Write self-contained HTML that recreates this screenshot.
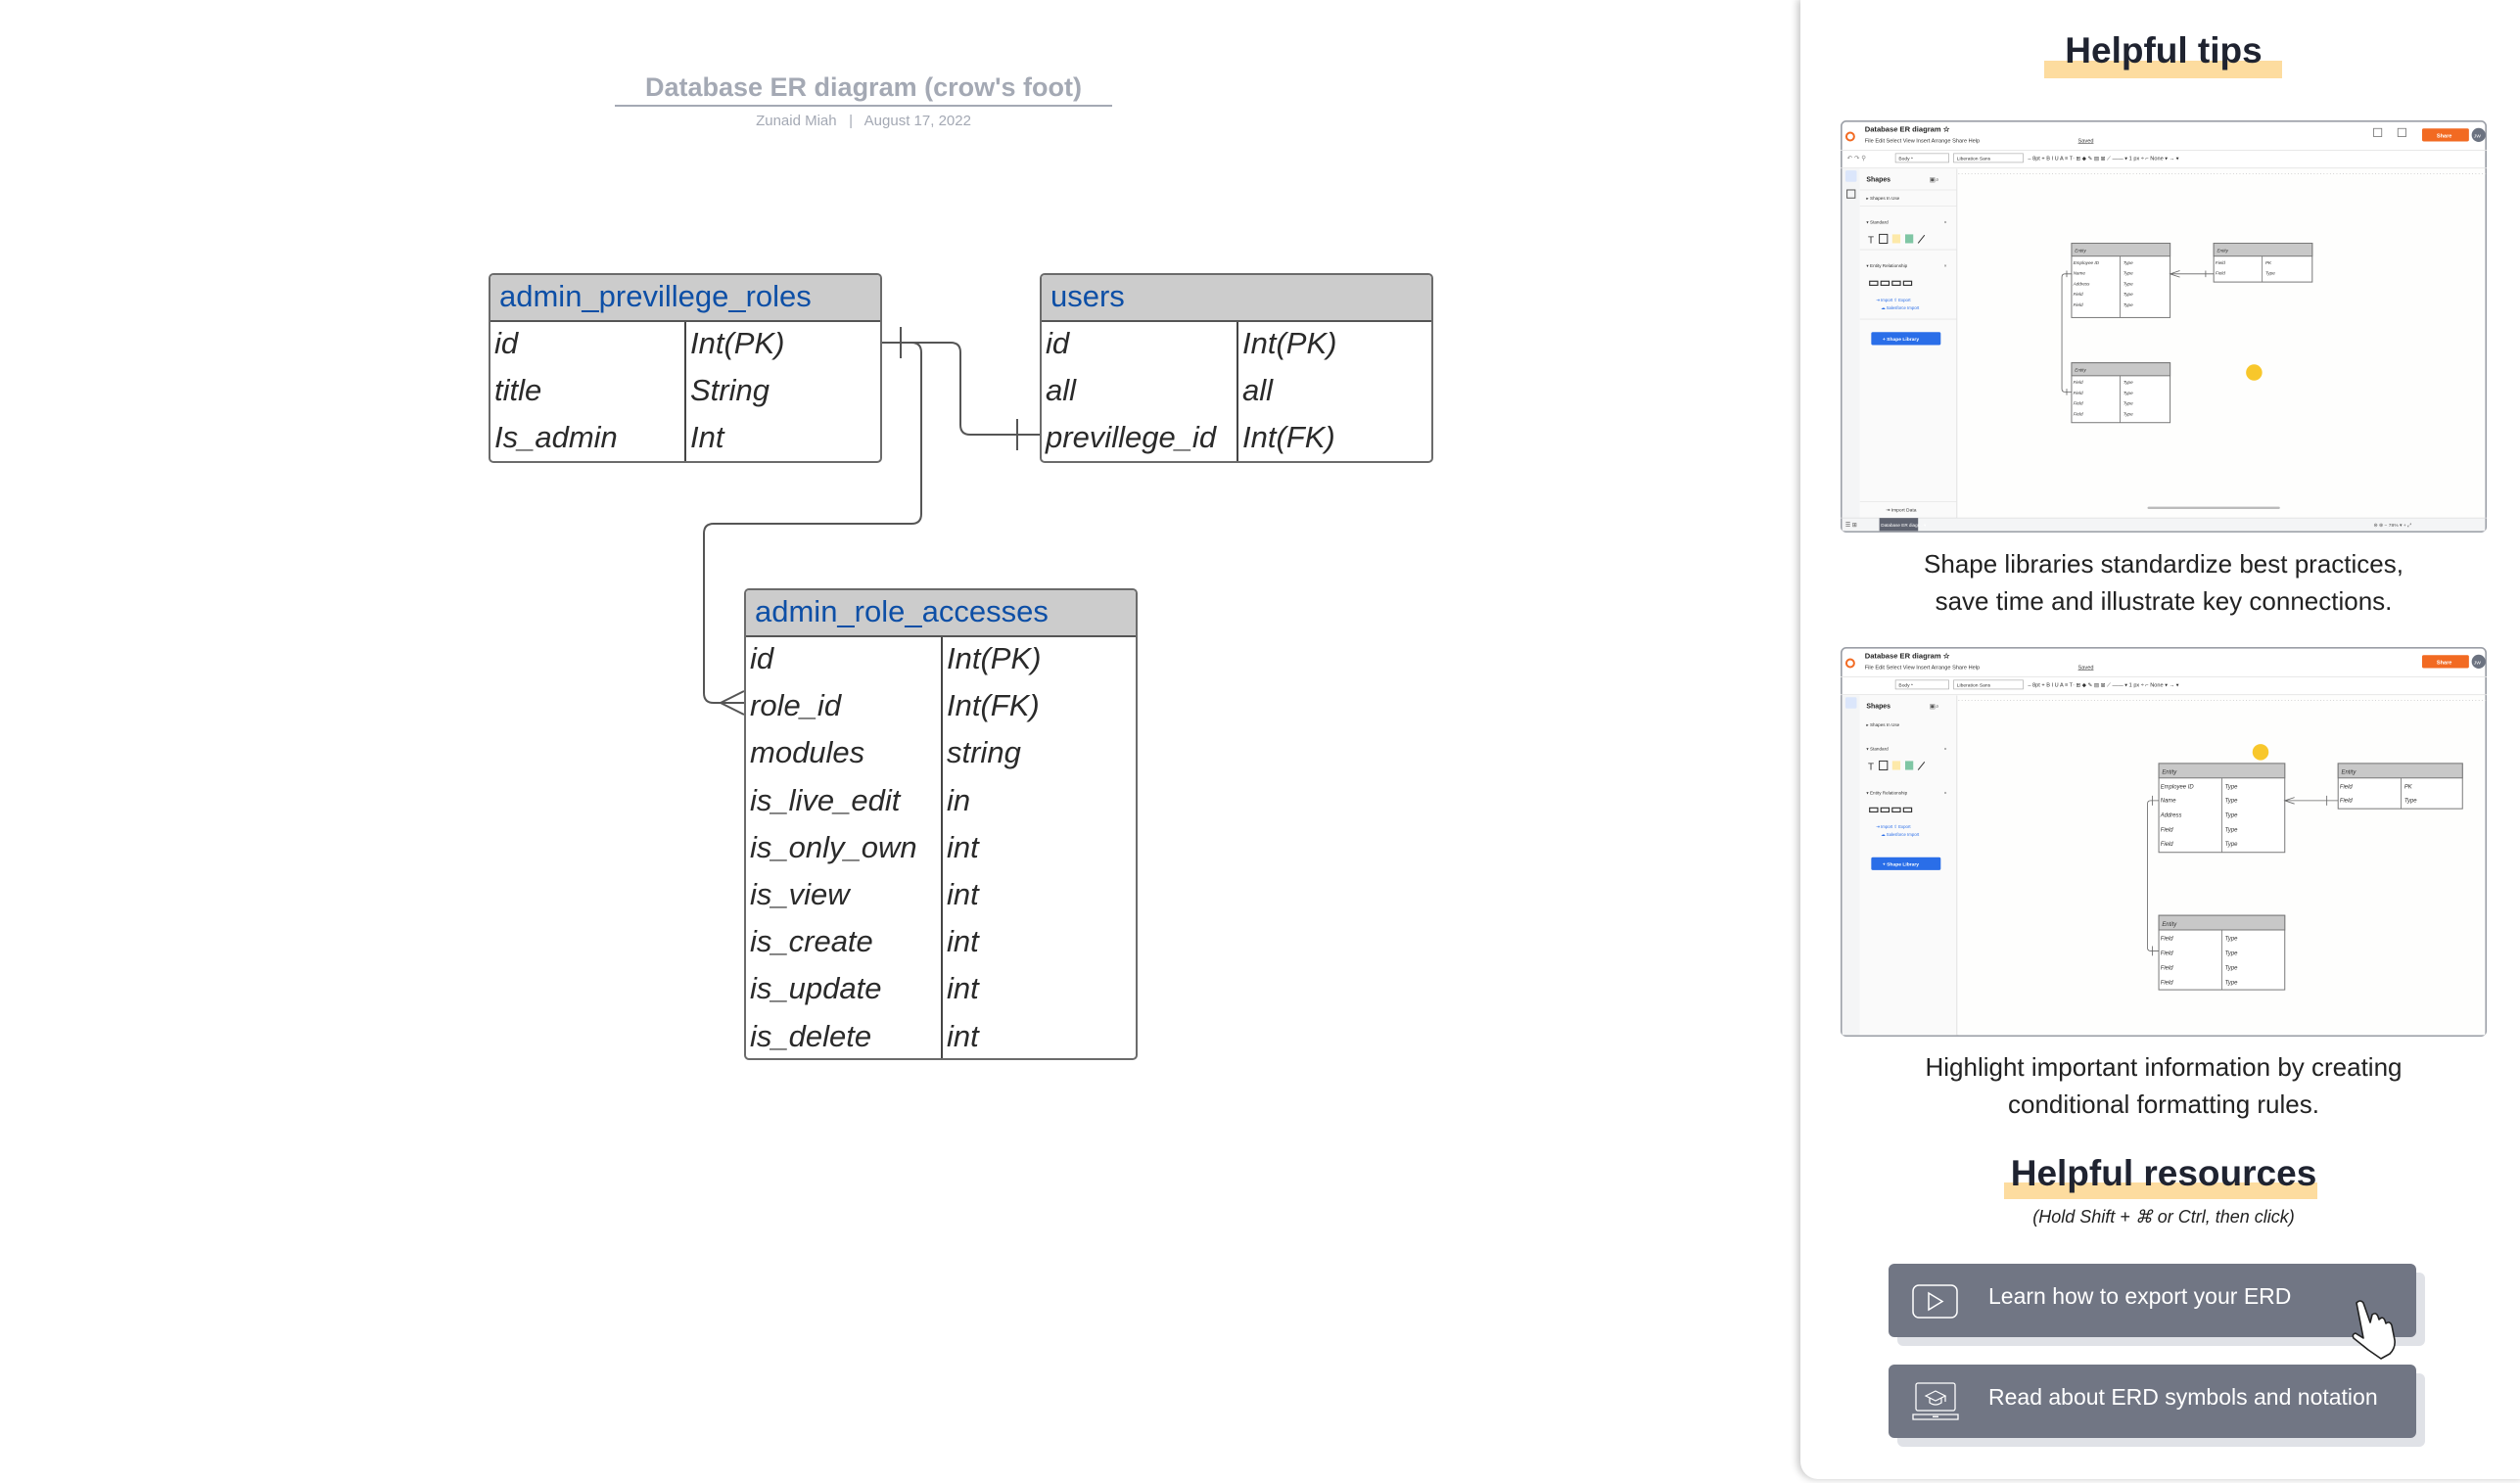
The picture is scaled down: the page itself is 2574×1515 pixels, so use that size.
<!DOCTYPE html>
<html><head><meta charset="utf-8">
<style>
html,body{margin:0;padding:0;background:#fff;}
body{width:2574px;height:1515px;position:relative;overflow:hidden;font-family:"Liberation Sans",sans-serif;}
.abs{position:absolute;}
.wrapL{position:absolute;left:-4px;top:-3px;width:2574px;height:1515px;}
.wrapR{position:absolute;left:-9px;top:-1px;width:2574px;height:1515px;}
.tbl{position:absolute;border:2px solid #6b6b6b;border-radius:5px;background:#fff;overflow:hidden;box-sizing:border-box;}
.tbl .hd{background:#cccccc;height:48px;border-bottom:2px solid #555;box-sizing:border-box;color:#0d4fa6;font-size:31px;line-height:44px;padding-left:9px;}
.tbl .body{position:relative;}
.tbl .row{height:48.2px;font-size:31px;font-style:italic;color:#2a2a2a;line-height:44px;position:relative;}
.tbl .row span{position:absolute;top:0;}
.tbl .div{position:absolute;top:0;bottom:0;width:2px;background:#444;}
.panel{position:absolute;left:1848px;top:0;width:740px;height:1512px;background:#fff;border-radius:0 0 0 18px;box-shadow:-3px 0 8px rgba(0,0,0,0.22);}
.ctr{position:absolute;text-align:center;width:660px;left:1889px;}
.btn{position:absolute;left:1938px;width:539px;height:75px;background:#717684;border-radius:6px;box-shadow:9px 9px 0 #e0e2e7;color:#fff;font-size:23px;}
.btn .t{position:absolute;left:102px;top:20px;}
</style></head><body>

<div class="wrapL">
<div class="abs" style="left:632px;top:77px;width:508px;text-align:center;color:#a4a9b4;font-weight:bold;font-size:27px;">Database ER diagram (crow's foot)</div>
<div class="abs" style="left:632px;top:110px;width:508px;height:2px;background:#a4a9b4;"></div>
<div class="abs" style="left:632px;top:118px;width:508px;text-align:center;color:#a4a9b4;font-size:15px;">Zunaid Miah &nbsp;&nbsp;|&nbsp;&nbsp; August 17, 2022</div>

<svg class="abs" style="left:0;top:0" width="1848" height="1515">
<g fill="none" stroke="#555" stroke-width="2">
<path d="M904,353 H975 Q985,353 985,363 V437 Q985,447 995,447 H1066"/>
<path d="M924,337 V369 M1043,431 V463"/>
<path d="M935,353 Q945,353 945,363 V528 Q945,538 935,538 H733 Q723,538 723,548 V711 Q723,721 733,721 H764"/>
<path d="M740,721 L764,709 M740,721 L764,733"/>
</g>
</svg>

<div class="tbl" style="left:503px;top:282px;width:402px;height:194px;">
<div class="hd">admin_previllege_roles</div>
<div class="body">
<div class="div" style="left:198px;height:144px"></div>
<div class="row"><span style="left:4px">id</span><span style="left:204px">Int(PK)</span></div>
<div class="row"><span style="left:4px">title</span><span style="left:204px">String</span></div>
<div class="row"><span style="left:4px">Is_admin</span><span style="left:204px">Int</span></div>
</div></div>

<div class="tbl" style="left:1066px;top:282px;width:402px;height:194px;">
<div class="hd">users</div>
<div class="body">
<div class="div" style="left:199px;height:144px"></div>
<div class="row"><span style="left:4px">id</span><span style="left:205px">Int(PK)</span></div>
<div class="row"><span style="left:4px">all</span><span style="left:205px">all</span></div>
<div class="row"><span style="left:4px">previllege_id</span><span style="left:205px">Int(FK)</span></div>
</div></div>

<div class="tbl" style="left:764px;top:604px;width:402px;height:482px;">
<div class="hd">admin_role_accesses</div>
<div class="body">
<div class="div" style="left:199px;height:434px"></div>
<div class="row"><span style="left:4px">id</span><span style="left:205px">Int(PK)</span></div>
<div class="row"><span style="left:4px">role_id</span><span style="left:205px">Int(FK)</span></div>
<div class="row"><span style="left:4px">modules</span><span style="left:205px">string</span></div>
<div class="row"><span style="left:4px">is_live_edit</span><span style="left:205px">in</span></div>
<div class="row"><span style="left:4px">is_only_own</span><span style="left:205px">int</span></div>
<div class="row"><span style="left:4px">is_view</span><span style="left:205px">int</span></div>
<div class="row"><span style="left:4px">is_create</span><span style="left:205px">int</span></div>
<div class="row"><span style="left:4px">is_update</span><span style="left:205px">int</span></div>
<div class="row"><span style="left:4px">is_delete</span><span style="left:205px">int</span></div>
</div></div>
</div>

<div class="wrapR">
<div class="panel"></div>
<div class="abs" style="left:2097px;top:63px;width:243px;height:18px;background:#fddc9f;"></div>
<div class="ctr" style="top:32px;font-size:37px;font-weight:bold;color:#1f2330;">Helpful tips</div>

<svg class="abs" style="left:1889px;top:124px" width="660" height="421" viewBox="0 0 400 255" preserveAspectRatio="none" font-family="Liberation Sans, sans-serif">
<rect x="0.5" y="0.5" width="399" height="254" rx="3" fill="#fff" stroke="#9a9ea6"/>
<rect x="73" y="30" width="326" height="216" fill="#fefefd"/>
<rect x="1" y="30" width="11" height="216" fill="#f4f5f6"/>
<rect x="12" y="30" width="60" height="216" fill="#fafafa"/>
<line x1="72" y1="30" x2="72" y2="246" stroke="#e0e0e0" stroke-width="0.6"/>
<line x1="0" y1="18.5" x2="400" y2="18.5" stroke="#e4e4e4" stroke-width="0.5"/>
<line x1="0" y1="29.5" x2="400" y2="29.5" stroke="#e4e4e4" stroke-width="0.5"/>
<line x1="73" y1="33" x2="400" y2="33" stroke="#ccc" stroke-width="0.6" stroke-dasharray="0.5 1.5"/>
<circle cx="6" cy="10" r="2.4" fill="none" stroke="#f26a22" stroke-width="1.2"/>
<text x="15" y="7" font-size="4.6" font-weight="bold" fill="#222">Database ER diagram ☆</text>
<text x="15" y="13.5" font-size="3.4" fill="#333">File  Edit  Select  View  Insert  Arrange  Share  Help</text>
<text x="147" y="13.5" font-size="3.4" fill="#333" text-decoration="underline">Saved</text>
<rect x="360" y="5" width="29" height="8" rx="1" fill="#f26a22"/>
<text x="369" y="10.5" font-size="3.4" fill="#fff" font-weight="bold">Share</text>
<circle cx="395" cy="9" r="4.3" fill="#6b7280"/>
<text x="392" y="10.5" font-size="3" fill="#fff">JW</text>
<rect x="330" y="5" width="5" height="5" fill="none" stroke="#777" stroke-width="0.5"/>
<rect x="345" y="5" width="5" height="5" fill="none" stroke="#777" stroke-width="0.5"/>
<rect x="34" y="20.5" width="33" height="5.5" fill="#fff" stroke="#aaa" stroke-width="0.4"/><text x="36" y="24.5" font-size="3" fill="#333">Body *</text>
<rect x="70" y="20.5" width="43" height="5.5" fill="#fff" stroke="#aaa" stroke-width="0.4"/><text x="72" y="24.5" font-size="3" fill="#333">Liberation Sans</text>
<text x="116" y="24.5" font-size="3.4" fill="#333">–  8pt +  B  I  U  A  ≡  T·   ⊞ ◆ ✎ ▤ ⊠ ⟋  —— ▾  1 px ÷  ⌐  None ▾  → ▾</text>
<text x="4" y="24.5" font-size="4" fill="#888">↶ ↷  ⚲</text>
<rect x="3" y="31" width="7" height="7" rx="1" fill="#dbe6fb"/>
<rect x="4" y="43" width="5" height="5" fill="none" stroke="#555" stroke-width="0.6"/>
<text x="16" y="38" font-size="4.2" font-weight="bold" fill="#222">Shapes</text>
<text x="55" y="38" font-size="4" fill="#555">▣⌕</text>
<line x1="12" y1="43" x2="72" y2="43" stroke="#e6e6e6" stroke-width="0.5"/>
<text x="16" y="49" font-size="2.8" fill="#333">▸  Shapes In Use</text>
<line x1="12" y1="53" x2="72" y2="53" stroke="#e6e6e6" stroke-width="0.5"/>
<text x="16" y="64" font-size="2.8" fill="#333">▾  Standard</text><text x="64" y="64" font-size="3" fill="#555">×</text>
<text x="17" y="76" font-size="6" fill="#333">T</text>
<rect x="24" y="70.5" width="5" height="5.5" fill="none" stroke="#333" stroke-width="0.6"/>
<rect x="32" y="70.5" width="5" height="5.5" fill="#fde9a9"/>
<rect x="40" y="70.5" width="5" height="5.5" fill="#7fc6a4"/>
<line x1="48" y1="76" x2="52" y2="71" stroke="#333" stroke-width="0.6"/>
<line x1="12" y1="80" x2="72" y2="80" stroke="#e6e6e6" stroke-width="0.5"/>
<text x="16" y="91" font-size="2.8" fill="#333">▾  Entity Relationship</text><text x="64" y="91" font-size="3" fill="#555">×</text>
<g fill="none" stroke="#333" stroke-width="0.7"><rect x="18" y="99.5" width="5" height="2.5"/><rect x="25" y="99.5" width="5" height="2.5"/><rect x="32" y="99.5" width="5" height="2.5"/><rect x="39" y="99.5" width="5" height="2.5"/></g>
<text x="22" y="112" font-size="2.6" fill="#2a6ee8">⇥ Import    ⇧ Export</text>
<text x="25" y="117" font-size="2.6" fill="#2a6ee8">☁ Salesforce Import</text>
<line x1="12" y1="123" x2="72" y2="123" stroke="#e6e6e6" stroke-width="0.5"/>
<rect x="19" y="131" width="43" height="8" rx="1" fill="#2a6ee8"/>
<text x="26" y="136.3" font-size="3" fill="#fff" font-weight="bold">+ Shape Library</text>
<line x1="12" y1="236" x2="72" y2="236" stroke="#e6e6e6" stroke-width="0.5"/>
<text x="28" y="242" font-size="3" fill="#333">⇥ Import Data</text>
<rect x="1" y="246" width="398" height="8" fill="#f4f5f6"/>
<line x1="0" y1="246" x2="400" y2="246" stroke="#ddd" stroke-width="0.5"/>
<rect x="24" y="246" width="24" height="8" fill="#5f6370"/>
<text x="25" y="251.5" font-size="2.8" fill="#fff">Database ER diagr... ▾</text>
<text x="3" y="251.5" font-size="3.5" fill="#555">☰ ⊞</text>
<text x="330" y="251.5" font-size="3" fill="#555">⊜  ⊛  −  78% ▾  +  ⤢</text>
<rect x="190" y="239" width="82" height="1.5" rx="0.7" fill="#bbb"/>
<g font-size="2.8" font-style="italic" fill="#333">
<rect x="143" y="76" width="61" height="46" fill="#fff" stroke="#777" stroke-width="0.6"/>
<rect x="143" y="76" width="61" height="8" fill="#c8c8c8" stroke="#777" stroke-width="0.6"/>
<line x1="173" y1="84" x2="173" y2="122" stroke="#777" stroke-width="0.5"/>
<text x="145" y="81.5">Entity</text>
<text x="144" y="89">Employee ID</text><text x="175" y="89">Type</text>
<text x="144" y="95.5">Name</text><text x="175" y="95.5">Type</text>
<text x="144" y="102">Address</text><text x="175" y="102">Type</text>
<text x="144" y="108.5">Field</text><text x="175" y="108.5">Type</text>
<text x="144" y="115">Field</text><text x="175" y="115">Type</text>
<rect x="231" y="76" width="61" height="24" fill="#fff" stroke="#777" stroke-width="0.6"/>
<rect x="231" y="76" width="61" height="8" fill="#c8c8c8" stroke="#777" stroke-width="0.6"/>
<line x1="261" y1="84" x2="261" y2="100" stroke="#777" stroke-width="0.5"/>
<text x="233" y="81.5">Entity</text>
<text x="232" y="89">Field</text><text x="263" y="89">PK</text>
<text x="232" y="95.5">Field</text><text x="263" y="95.5">Type</text>
<rect x="143" y="150" width="61" height="37" fill="#fff" stroke="#777" stroke-width="0.6"/>
<rect x="143" y="150" width="61" height="8" fill="#c8c8c8" stroke="#777" stroke-width="0.6"/>
<line x1="173" y1="158" x2="173" y2="187" stroke="#777" stroke-width="0.5"/>
<text x="145" y="155.5">Entity</text>
<text x="144" y="163">Field</text><text x="175" y="163">Type</text>
<text x="144" y="169.5">Field</text><text x="175" y="169.5">Type</text>
<text x="144" y="176">Field</text><text x="175" y="176">Type</text>
<text x="144" y="182.5">Field</text><text x="175" y="182.5">Type</text>
</g>
<g fill="none" stroke="#666" stroke-width="0.5">
<path d="M204,95 H231 M210,93 L204,95 L210,97 M226,93 V97"/>
<path d="M143,95 H139 Q137,95 137,97 V166 Q137,168 139,168 H143 M140,93 V97 M140,166 V170"/>
</g>
<circle cx="256" cy="156" r="5" fill="#f8c72b"/>
</svg>
<div class="ctr" style="top:558px;font-size:26px;line-height:38px;color:#222;">Shape libraries standardize best practices,<br>save time and illustrate key connections.</div>

<svg class="abs" style="left:1889px;top:662px" width="660" height="398" viewBox="0 0 400 241" preserveAspectRatio="none" font-family="Liberation Sans, sans-serif">
<rect x="0.5" y="0.5" width="399" height="240" rx="3" fill="#fff" stroke="#9a9ea6"/>
<rect x="73" y="30" width="326" height="210" fill="#fefefd"/>
<rect x="1" y="30" width="11" height="210" fill="#f4f5f6"/>
<rect x="12" y="30" width="60" height="210" fill="#fafafa"/>
<line x1="72" y1="30" x2="72" y2="240" stroke="#e0e0e0" stroke-width="0.6"/>
<line x1="0" y1="18.5" x2="400" y2="18.5" stroke="#e4e4e4" stroke-width="0.5"/>
<line x1="0" y1="29.5" x2="400" y2="29.5" stroke="#e4e4e4" stroke-width="0.5"/>
<line x1="73" y1="33" x2="400" y2="33" stroke="#ccc" stroke-width="0.6" stroke-dasharray="0.5 1.5"/>
<circle cx="6" cy="10" r="2.4" fill="none" stroke="#f26a22" stroke-width="1.2"/>
<text x="15" y="7" font-size="4.6" font-weight="bold" fill="#222">Database ER diagram ☆</text>
<text x="15" y="13.5" font-size="3.4" fill="#333">File  Edit  Select  View  Insert  Arrange  Share  Help</text>
<text x="147" y="13.5" font-size="3.4" fill="#333" text-decoration="underline">Saved</text>
<rect x="360" y="5" width="29" height="8" rx="1" fill="#f26a22"/>
<text x="369" y="10.5" font-size="3.4" fill="#fff" font-weight="bold">Share</text>
<circle cx="395" cy="9" r="4.3" fill="#6b7280"/>
<text x="392" y="10.5" font-size="3" fill="#fff">JW</text>
<rect x="34" y="20.5" width="33" height="5.5" fill="#fff" stroke="#aaa" stroke-width="0.4"/><text x="36" y="24.5" font-size="3" fill="#333">Body *</text>
<rect x="70" y="20.5" width="43" height="5.5" fill="#fff" stroke="#aaa" stroke-width="0.4"/><text x="72" y="24.5" font-size="3" fill="#333">Liberation Sans</text>
<text x="116" y="24.5" font-size="3.4" fill="#333">–  8pt +  B  I  U  A  ≡  T·   ⊞ ◆ ✎ ▤ ⊠ ⟋  —— ▾  1 px ÷  ⌐  None ▾  → ▾</text>
<rect x="3" y="31" width="7" height="7" rx="1" fill="#dbe6fb"/>
<text x="16" y="38" font-size="4.2" font-weight="bold" fill="#222">Shapes</text>
<text x="55" y="38" font-size="4" fill="#555">▣⌕</text>
<text x="16" y="49" font-size="2.8" fill="#333">▸  Shapes In Use</text>
<text x="16" y="64" font-size="2.8" fill="#333">▾  Standard</text><text x="64" y="64" font-size="3" fill="#555">×</text>
<text x="17" y="76" font-size="6" fill="#333">T</text>
<rect x="24" y="70.5" width="5" height="5.5" fill="none" stroke="#333" stroke-width="0.6"/>
<rect x="32" y="70.5" width="5" height="5.5" fill="#fde9a9"/>
<rect x="40" y="70.5" width="5" height="5.5" fill="#7fc6a4"/>
<line x1="48" y1="76" x2="52" y2="71" stroke="#333" stroke-width="0.6"/>
<text x="16" y="91" font-size="2.8" fill="#333">▾  Entity Relationship</text><text x="64" y="91" font-size="3" fill="#555">×</text>
<g fill="none" stroke="#333" stroke-width="0.7"><rect x="18" y="99.5" width="5" height="2.5"/><rect x="25" y="99.5" width="5" height="2.5"/><rect x="32" y="99.5" width="5" height="2.5"/><rect x="39" y="99.5" width="5" height="2.5"/></g>
<text x="22" y="112" font-size="2.6" fill="#2a6ee8">⇥ Import    ⇧ Export</text>
<text x="25" y="117" font-size="2.6" fill="#2a6ee8">☁ Salesforce Import</text>
<rect x="19" y="130" width="43" height="8" rx="1" fill="#2a6ee8"/>
<text x="26" y="135.3" font-size="3" fill="#fff" font-weight="bold">+ Shape Library</text>
<g font-size="3.6" font-style="italic" fill="#333">
<rect x="197" y="72" width="78" height="55" fill="#fff" stroke="#777" stroke-width="0.6"/>
<rect x="197" y="72" width="78" height="9" fill="#c8c8c8" stroke="#777" stroke-width="0.6"/>
<line x1="236" y1="81" x2="236" y2="127" stroke="#777" stroke-width="0.5"/>
<text x="199" y="78.5">Entity</text>
<text x="198" y="87.5">Employee ID</text><text x="238" y="87.5">Type</text>
<text x="198" y="96">Name</text><text x="238" y="96">Type</text>
<text x="198" y="105">Address</text><text x="238" y="105">Type</text>
<text x="198" y="114">Field</text><text x="238" y="114">Type</text>
<text x="198" y="123">Field</text><text x="238" y="123">Type</text>
<rect x="308" y="72" width="77" height="28" fill="#fff" stroke="#777" stroke-width="0.6"/>
<rect x="308" y="72" width="77" height="9" fill="#c8c8c8" stroke="#777" stroke-width="0.6"/>
<line x1="347" y1="81" x2="347" y2="100" stroke="#777" stroke-width="0.5"/>
<text x="310" y="78.5">Entity</text>
<text x="309" y="87.5">Field</text><text x="349" y="87.5">PK</text>
<text x="309" y="96">Field</text><text x="349" y="96">Type</text>
<rect x="197" y="166" width="78" height="46" fill="#fff" stroke="#777" stroke-width="0.6"/>
<rect x="197" y="166" width="78" height="9" fill="#c8c8c8" stroke="#777" stroke-width="0.6"/>
<line x1="236" y1="175" x2="236" y2="212" stroke="#777" stroke-width="0.5"/>
<text x="199" y="172.5">Entity</text>
<text x="198" y="181.5">Field</text><text x="238" y="181.5">Type</text>
<text x="198" y="190.5">Field</text><text x="238" y="190.5">Type</text>
<text x="198" y="199.5">Field</text><text x="238" y="199.5">Type</text>
<text x="198" y="208.5">Field</text><text x="238" y="208.5">Type</text>
</g>
<g fill="none" stroke="#666" stroke-width="0.5">
<path d="M275,95 H308 M281,93 L275,95 L281,97 M301,92 V98"/>
<path d="M197,95 H192 Q190,95 190,97 V186 Q190,188 192,188 H197 M193,92 V98 M193,185 V191"/>
</g>
<circle cx="260" cy="65" r="5" fill="#f8c72b"/>
</svg>
<div class="ctr" style="top:1072px;font-size:26px;line-height:38px;color:#222;">Highlight important information by creating<br>conditional formatting rules.</div>

<div class="abs" style="left:2056px;top:1209px;width:320px;height:17px;background:#fddc9f;"></div>
<div class="ctr" style="top:1179px;font-size:37px;font-weight:bold;color:#1f2330;">Helpful resources</div>
<div class="ctr" style="top:1234px;font-size:18px;font-style:italic;color:#222;">(Hold Shift + ⌘ or Ctrl, then click)</div>

<div class="btn" style="top:1292px;">
<svg class="abs" style="left:24px;top:21px" width="48" height="36"><rect x="1" y="1" width="45" height="33" rx="6" fill="none" stroke="#fff" stroke-width="1.5"/><path d="M17,9 L31,17.5 L17,26 Z" fill="none" stroke="#fff" stroke-width="1.5"/></svg>
<div class="t">Learn how to export your ERD</div>
<svg class="abs" style="left:470px;top:36px" width="50" height="62" viewBox="0 0 50 62"><path d="M8,4 Q12,0 15,4 L22,24 L24,16 Q28,13 30,18 L31,21 Q35,17 37,22 L38,25 Q42,22 44,27 L47,42 Q48,50 42,56 L33,61 L20,52 L5,40 Q3,36 7,35 L15,40 Z" fill="#fff" stroke="#222" stroke-width="1.6" stroke-linejoin="round"/></svg>
</div>
<div class="btn" style="top:1395px;">
<svg class="abs" style="left:24px;top:18px" width="48" height="40"><rect x="4" y="1" width="40" height="28" rx="2" fill="none" stroke="#fff" stroke-width="1.3"/><path d="M1,33 H47 V38 H1 Z" fill="none" stroke="#fff" stroke-width="1.3"/><path d="M14,14 L24,9 L34,14 L24,19 Z M18,16 V21 Q24,25 30,21 V16 M34,14 V20" fill="none" stroke="#fff" stroke-width="1.2"/><rect x="21" y="34.5" width="6" height="1.5" fill="#fff"/></svg>
<div class="t">Read about ERD symbols and notation</div>
</div>
</div>

</body></html>
